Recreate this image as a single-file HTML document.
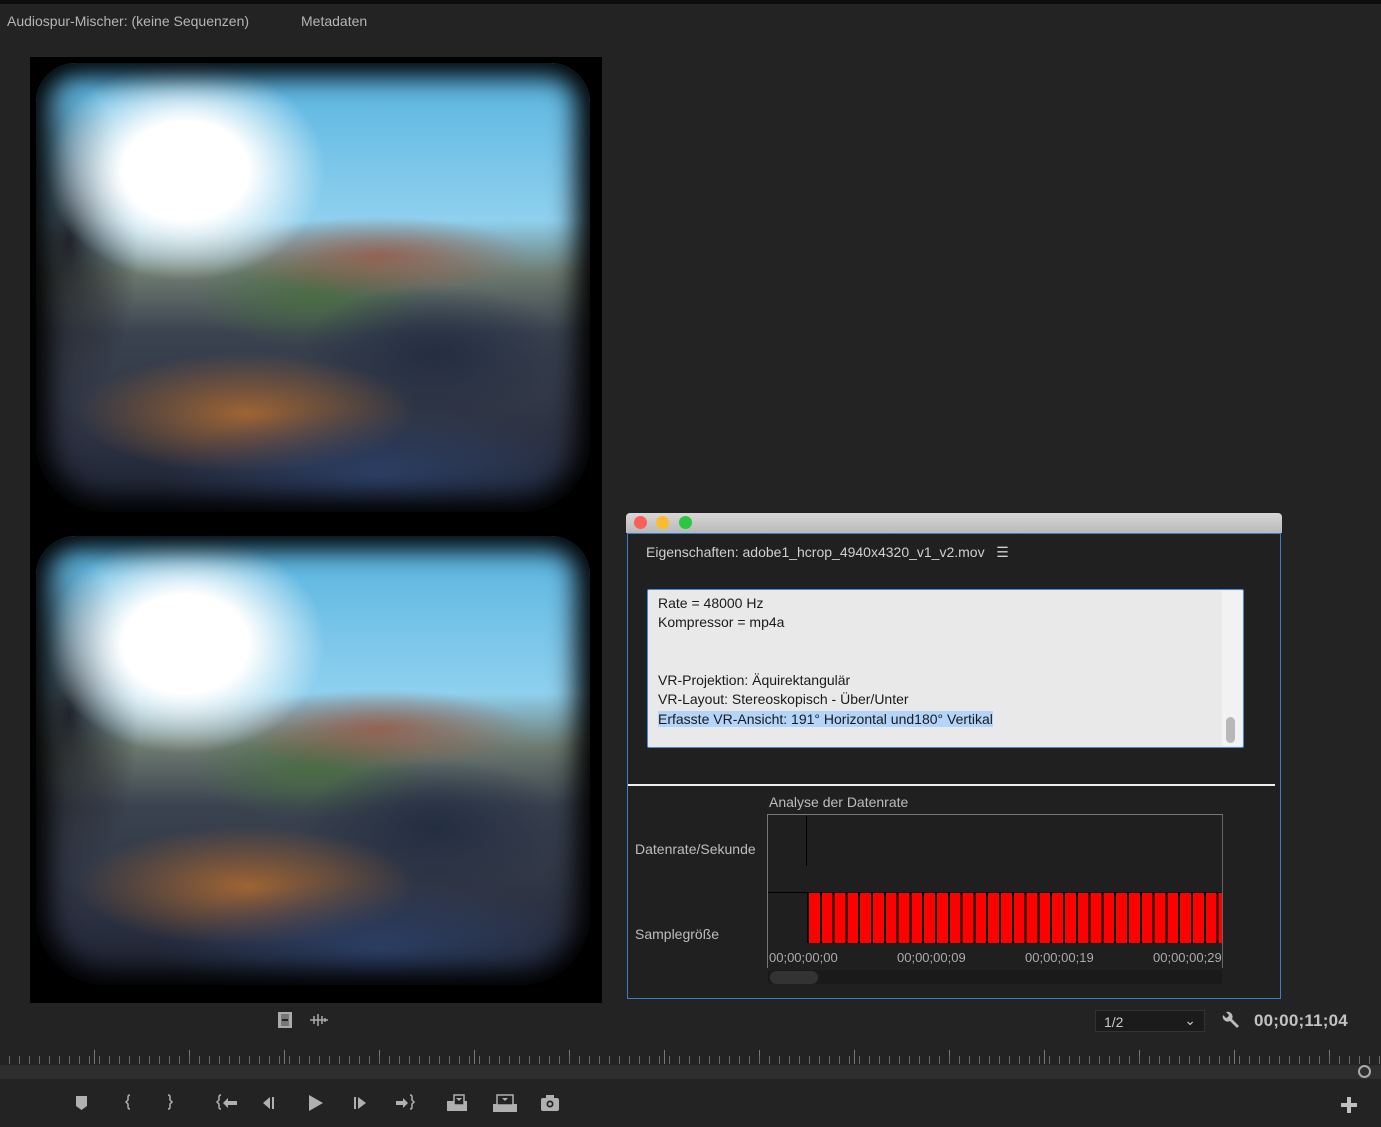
<!DOCTYPE html>
<html><head><meta charset="utf-8"><style>
*{margin:0;padding:0;box-sizing:border-box}
body{width:1381px;height:1127px;background:#232323;position:relative;overflow:hidden;font-family:"Liberation Sans",sans-serif;color:#bdbdbd}
.a{position:absolute}
.photo{position:absolute;left:30px;width:572px;height:473px;background:#000;overflow:hidden}
.ph{position:absolute;left:6px;top:6px;right:12px;bottom:18px;border-radius:40px 40px 70px 70px;
background:
radial-gradient(ellipse 140px 110px at 27% 24%,#fff 0%,#fff 45%,rgba(255,255,255,0) 100%),
radial-gradient(ellipse 70px 160px at 6% 40%,rgba(30,30,35,.95),rgba(30,30,35,0)),
radial-gradient(ellipse 220px 70px at 62% 92%,rgba(45,65,105,.9),rgba(45,65,105,0)),
radial-gradient(ellipse 170px 60px at 38% 78%,rgba(170,105,50,.9),rgba(170,105,50,0)),
radial-gradient(ellipse 140px 70px at 72% 65%,rgba(35,45,65,.95),rgba(35,45,65,0)),
radial-gradient(ellipse 150px 40px at 62% 43%,rgba(150,90,70,.85),rgba(150,90,70,0)),
radial-gradient(ellipse 120px 50px at 50% 52%,rgba(70,110,60,.8),rgba(70,110,60,0)),
linear-gradient(180deg,#56b3e0 0%,#8fd0ee 35%,#6d7a70 47%,#3b4350 60%,#2b3040 85%,#1c2232 100%);
box-shadow:inset 0 0 26px 14px #000}
.tick{position:absolute;left:0;right:0;top:1050px;height:14px;
background:repeating-linear-gradient(90deg,transparent 0 9px,#6a6a6a 9px 10px) 0 6px/100% 8px no-repeat,
repeating-linear-gradient(90deg,transparent 0 94px,#777 94px 95px) 0 0/100% 14px no-repeat}
</style></head><body>
<div class="a" style="left:0;top:0;width:1381px;height:4px;background:#0d0d0d"></div>
<div class="a" style="left:7px;top:13px;font-size:14px;color:#b5b5b5">Audiospur-Mischer: (keine Sequenzen)</div>
<div class="a" style="left:301px;top:13px;font-size:14px;color:#b5b5b5">Metadaten</div>

<div class="photo" style="top:57px"><div class="ph"></div></div>
<div class="photo" style="top:530px"><div class="ph"></div></div>

<svg class="a" style="left:277px;top:1011px" width="16" height="18"><rect x="1" y="1" width="14" height="16" fill="#aaa"/><rect x="4" y="3" width="8" height="12" fill="#777"/><rect x="5" y="8" width="6" height="2" fill="#222"/></svg>
<svg class="a" style="left:309px;top:1013px" width="20" height="14"><path d="M1 7H19M5 3V11M9 1V13M13 3V11M16 5V9" stroke="#aaa" stroke-width="1.5"/></svg>

<div class="a" style="left:626px;top:513px;width:656px;height:20px;background:linear-gradient(#d8d8d8,#b8b8b8);border-radius:4px 4px 0 0"></div>
<div class="a" style="left:634px;top:516px;width:13px;height:13px;border-radius:50%;background:#fc5f57"></div>
<div class="a" style="left:656px;top:516px;width:13px;height:13px;border-radius:50%;background:#fdbb2e"></div>
<div class="a" style="left:679px;top:516px;width:13px;height:13px;border-radius:50%;background:#29c840"></div>
<div class="a" style="left:627px;top:533px;width:654px;height:466px;border:1.5px solid #3d7ec8;background:#202020"></div>
<div class="a" style="left:646px;top:544px;font-size:14px;color:#d0d0d0">Eigenschaften: adobe1_hcrop_4940x4320_v1_v2.mov &nbsp; ☰</div>
<div class="a" style="left:647px;top:589px;width:597px;height:159px;background:#e9e9e9;border:1.5px solid #4a8ad6;border-radius:2px"></div>
<div class="a" style="left:1222px;top:591px;width:20px;height:155px;background:#f2f2f2"></div>
<div class="a" style="left:1226px;top:717px;width:9px;height:26px;background:#b8b8b8;border-radius:5px"></div>
<div class="a" style="left:658px;top:594px;font-size:14px;line-height:19.3px;color:#1a1a1a">Rate = 48000 Hz<br>Kompressor = mp4a<br><br><br>VR-Projektion: Äquirektangulär<br>VR-Layout: Stereoskopisch - Über/Unter<br><span style="background:#b4d5fa">Erfasste VR-Ansicht: 191° Horizontal und180° Vertikal</span></div>
<div class="a" style="left:628px;top:784px;width:647px;height:2px;background:#eee"></div>
<div class="a" style="left:769px;top:794px;font-size:14px;color:#bdbdbd">Analyse der Datenrate</div>
<div class="a" style="left:635px;top:841px;font-size:14px;color:#bdbdbd">Datenrate/Sekunde</div>
<div class="a" style="left:635px;top:926px;font-size:14px;color:#bdbdbd">Samplegröße</div>
<div class="a" style="left:767px;top:814px;width:456px;height:154px;border:1px solid #777;border-bottom:none;border-right-color:#666;background:#1f1f1f"></div>
<div class="a" style="left:768px;top:892px;width:454px;height:1px;background:#000"></div>
<div class="a" style="left:806px;top:816px;width:1px;height:50px;background:#000"></div>
<div class="a" style="left:807px;top:893px;width:415px;height:50px;background:repeating-linear-gradient(90deg,#000 0 2px,#f00 2px 12.8px)"></div>
<div class="a" style="left:769px;top:950px;width:453px;height:18px;overflow:hidden;font-size:13px;color:#aaa;white-space:nowrap">00;00;00;00<span style="position:absolute;left:128px">00;00;00;09</span><span style="position:absolute;left:256px">00;00;00;19</span><span style="position:absolute;left:384px">00;00;00;29</span></div>
<div class="a" style="left:768px;top:970px;width:454px;height:14px;background:#1a1a1a"></div>
<div class="a" style="left:770px;top:971px;width:48px;height:13px;border-radius:7px;background:#333"></div>

<div class="a" style="left:1095px;top:1010px;width:110px;height:22px;background:#1b1b1b;border:1px solid #333;font-size:14px;color:#c8c8c8;padding:3px 8px">1/2<span style="position:absolute;right:8px;top:1px">⌄</span></div>
<svg class="a" style="left:1220px;top:1011px" width="20" height="20"><path d="M3 4a5 5 0 0 0 7 6l7 7 2-2-7-7a5 5 0 0 0-6-7l3 3-1 2-2 1z" fill="#bbb"/></svg>
<div class="a" style="left:1254px;top:1011px;font-size:17px;font-weight:bold;color:#c2c2c2;letter-spacing:.2px">00;00;11;04</div>

<div class="tick"></div>
<div class="a" style="left:0;top:1065px;width:1381px;height:14px;background:#2e2e2e"></div>
<div class="a" style="left:1358px;top:1065px;width:13px;height:13px;border-radius:50%;border:2px solid #aaa"></div>

<svg class="a" style="left:0;top:1092px" width="600" height="22" fill="#b0b0b0" stroke="#b0b0b0">
<path d="M76 4h11v10l-5.5 4-5.5-4z" stroke="none"/>
<path d="M130 3q-2 0-2 2v3l-2 2 2 2v3q0 2 2 2" fill="none" stroke-width="1.5"/>
<path d="M168 3q2 0 2 2v3l2 2-2 2v3q0 2-2 2" fill="none" stroke-width="1.5"/>
<path d="M221 3q-2 0-2 2v3l-2 2 2 2v3q0 2 2 2" fill="none" stroke-width="1.5"/><path d="M223 11l5-5v3h9v4h-9v3z" stroke="none"/>
<path d="M263 11l7-6v12z" stroke="none"/><rect x="272" y="5" width="2" height="12" stroke="none"/>
<path d="M309 3l14 8-14 8z" stroke="none"/>
<rect x="354" y="5" width="2" height="12" stroke="none"/><path d="M358 5l8 6-8 6z" stroke="none"/>
<path d="M396 9h7v-3l5 5-5 5v-3h-7z" stroke="none"/><path d="M410 3q2 0 2 2v3l2 2-2 2v3q0 2-2 2" fill="none" stroke-width="1.5"/>
<rect x="447" y="9" width="20" height="10" stroke="none"/><rect x="454" y="3" width="10" height="10" fill="#232323" stroke-width="1.5"/><path d="M456 6h6l-3 3z" stroke="none"/>
<rect x="493" y="12" width="24" height="8" stroke="none"/><rect x="497" y="3" width="16" height="10" fill="#232323" stroke-width="1.5"/><path d="M502 6h6l-3 3z" stroke="none"/>
<rect x="541" y="6" width="18" height="13" rx="2" stroke="none"/><rect x="546" y="3" width="8" height="4" stroke="none"/><circle cx="550" cy="12" r="3.5" fill="#232323" stroke="none"/><circle cx="550" cy="12" r="1.8" stroke="none"/>
</svg>
<div class="a" style="left:1341px;top:1103px;width:16px;height:4px;background:#c0c0c0"></div>
<div class="a" style="left:1347px;top:1097px;width:4px;height:16px;background:#c0c0c0"></div>
</body></html>
